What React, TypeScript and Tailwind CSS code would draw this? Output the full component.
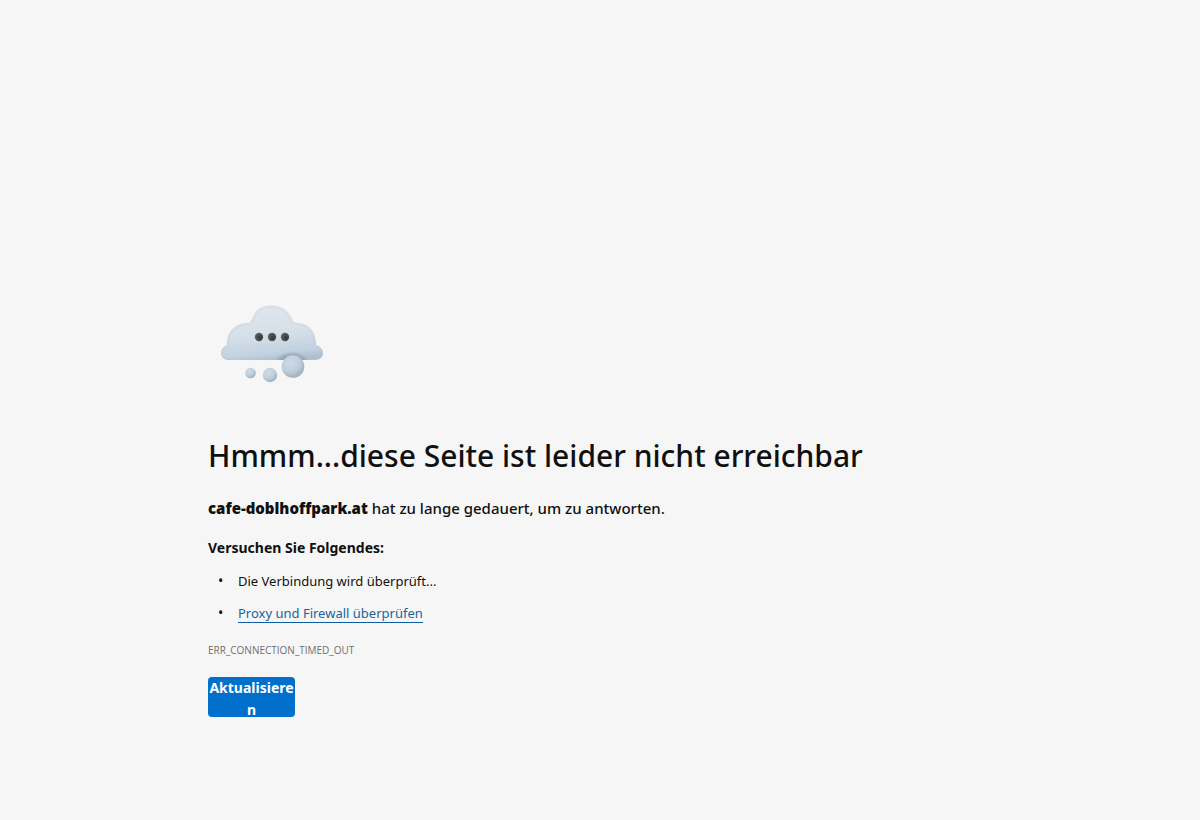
const CLOUD_PATH =
  "M20 80C16 80 13 77 13 73C13 69.500 15.500 66.500 19 65C18 53 27 43 40 43C42 43 43.500 41 44.500 38C47 30 54 25.500 63.500 25.500C73 25.500 81 31 84 39C85 42 86.500 43 89 43C101 43.500 108.500 52 108 65C112 66 115 69 115 73C115 77 112 80 107 80Z";

function CloudIcon() {
  return (
    <svg viewBox="0 0 128 128" className="size-32" role="img" aria-label="Wolke">
      <defs>
        <linearGradient id="cloud" x1="0.4" y1="0" x2="0.6" y2="1">
          <stop offset="0" stopColor="#dfe7ee" />
          <stop offset="0.5" stopColor="#d5e0e9" />
          <stop offset="0.85" stopColor="#c3d2e0" />
          <stop offset="1" stopColor="#afc0d0" />
        </linearGradient>
        <radialGradient id="ball" cx="0.38" cy="0.32" r="0.72">
          <stop offset="0" stopColor="#cfdbe6" />
          <stop offset="0.6" stopColor="#bfcddb" />
          <stop offset="1" stopColor="#98aabb" />
        </radialGradient>
        <radialGradient id="shade">
          <stop offset="0" stopColor="#6d8297" stopOpacity="0.9" />
          <stop offset="0.7" stopColor="#7b91a6" stopOpacity="0.5" />
          <stop offset="1" stopColor="#8da3b8" stopOpacity="0" />
        </radialGradient>
        <radialGradient id="dot" cx="0.65" cy="0.6" r="0.65">
          <stop offset="0" stopColor="#353535" />
          <stop offset="1" stopColor="#606060" />
        </radialGradient>
        <filter id="soft" x="-10%" y="-10%" width="120%" height="120%">
          <feGaussianBlur stdDeviation="1.2" />
        </filter>
        <clipPath id="outline">
          <path d={CLOUD_PATH} />
        </clipPath>
      </defs>
      <path d={CLOUD_PATH} fill="url(#cloud)" />
      <g clipPath="url(#outline)">
        <path
          d={CLOUD_PATH}
          fill="none"
          stroke="#a9bccd"
          strokeWidth="2"
          opacity="0.3"
          filter="url(#soft)"
        />
        <ellipse cx="84" cy="83" rx="18" ry="12" fill="url(#shade)" />
      </g>
      <circle cx="85" cy="86.500" r="11.300" fill="url(#ball)" />
      <circle cx="62" cy="95" r="7.200" fill="url(#ball)" />
      <circle cx="42.500" cy="93" r="5.300" fill="url(#ball)" />
      <circle cx="51" cy="57" r="4.200" fill="url(#dot)" />
      <circle cx="64" cy="57" r="4.200" fill="url(#dot)" />
      <circle cx="77" cy="57" r="4.200" fill="url(#dot)" />
    </svg>
  );
}

export default function App() {
  return (
    <div className="min-h-screen bg-[#f6f6f6] px-6 pt-[280px] pb-12 font-['Noto_Sans','Open_Sans',sans-serif] text-[#101010]">
      <main className="mx-auto flex max-w-[784px] flex-col items-start">
        <CloudIcon />
        <h1 className="mt-6 text-[30px] leading-12 font-medium">
          Hmmm...diese Seite ist leider nicht erreichbar
        </h1>
        <p className="mt-4 text-[15px] leading-6 font-medium">
          <strong className="font-['Open_Sans',sans-serif] font-extrabold">cafe-doblhoffpark.at</strong> hat zu lange gedauert, um zu antworten.
        </p>
        <h2 className="mt-4 text-sm leading-6 font-bold">Versuchen Sie Folgendes:</h2>
        <ul className="mt-[11px] flex flex-col gap-3 pl-[10px] text-[13px] leading-5">
          <li className="flex items-center before:w-5 before:text-sm before:leading-5 before:content-['•']">
            Die Verbindung wird überprüft...
          </li>
          <li className="flex items-center before:w-5 before:text-sm before:leading-5 before:content-['•']">
            <a href="#proxy" className="border-b border-[#0f5ea3] leading-[18px] text-[#20639c]">
              Proxy und Firewall überprüfen
            </a>
          </li>
        </ul>
        <p className="mt-[17px] font-['Open_Sans',sans-serif] text-[10px] leading-5 text-[#6f6f6f]">
          ERR_CONNECTION_TIMED_OUT
        </p>
        <button
          type="button"
          className="mt-[17px] h-10 w-[87px] overflow-hidden rounded bg-[#0070cc] text-sm leading-[22px] font-bold break-all text-white"
        >
          Aktualisieren
        </button>
      </main>
    </div>
  );
}
